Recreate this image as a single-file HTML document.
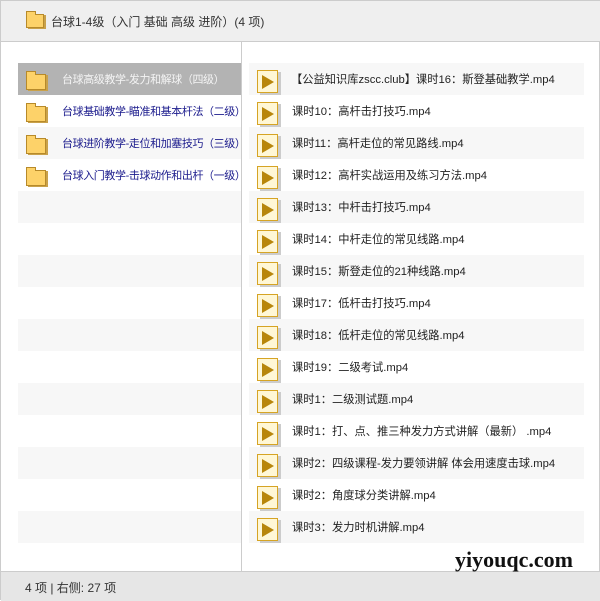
<!DOCTYPE html><html><head><meta charset="utf-8"><style>
*{margin:0;padding:0;box-sizing:border-box}
body{width:600px;height:600px;background:#fff;font-family:"Liberation Sans","Noto Sans CJK SC",sans-serif;font-size:11px;color:#222;position:relative;overflow:hidden;border:1px solid #ccc}
.hdr{position:absolute;left:0;top:0;width:600px;height:41px;background:#efefef;border-bottom:1px solid #ccc}
.ftr{position:absolute;left:0;top:570px;width:600px;height:30px;background:#e6e6e6;border-top:1px solid #ccc}
.div{position:absolute;left:240px;top:41px;width:1px;height:529px;background:#ccc}
.row{position:absolute;height:32px;line-height:34px;white-space:nowrap;overflow:hidden}
.L span{letter-spacing:-0.4px}
.R span{font-size:11.25px}
.fold{position:absolute;width:20px;height:16px;background:#fdd269;border:1px solid #b78a2a;box-shadow:2px 1px 0 #c9a14a}
.fold:before{content:"";position:absolute;left:-1px;top:-4px;width:8px;height:3px;background:#fdd269;border:1px solid #b78a2a;border-bottom:none}
.file{position:absolute;left:8px;top:7px;width:21px;height:23px;background:#fff7d6;border:1px solid #d6a424;box-shadow:3px 2px 0 #ccc}
.file:after{content:"";position:absolute;left:4px;top:4px;border-left:12px solid #b8860b;border-top:7px solid transparent;border-bottom:7px solid transparent}
</style></head><body>
<div class="hdr"><div class="fold" style="left:25px;top:13px;width:18px;height:14px"></div><span style="position:absolute;left:50px;top:12px;font-size:12px;color:#333">台球1-4级（入门 基础 高级 进阶）(4 项)</span></div>
<div class="div"></div>
<div class="row L" style="left:17px;top:62px;width:223px;background:#b3b3b3;color:#f4f4f4"><div class="fold" style="left:8px;top:11px"></div><span style="position:absolute;left:44px">台球高级教学-发力和解球（四级）</span></div>
<div class="row L" style="left:17px;top:94px;width:223px;color:#1a1a8c"><div class="fold" style="left:8px;top:11px"></div><span style="position:absolute;left:44px">台球基础教学-瞄准和基本杆法（二级）</span></div>
<div class="row L" style="left:17px;top:126px;width:223px;background:#f7f7f7;color:#1a1a8c"><div class="fold" style="left:8px;top:11px"></div><span style="position:absolute;left:44px">台球进阶教学-走位和加塞技巧（三级）</span></div>
<div class="row L" style="left:17px;top:158px;width:223px;color:#1a1a8c"><div class="fold" style="left:8px;top:11px"></div><span style="position:absolute;left:44px">台球入门教学-击球动作和出杆（一级）</span></div>
<div class="row" style="left:17px;top:190px;width:223px;background:#f7f7f7"></div>
<div class="row" style="left:17px;top:254px;width:223px;background:#f7f7f7"></div>
<div class="row" style="left:17px;top:318px;width:223px;background:#f7f7f7"></div>
<div class="row" style="left:17px;top:382px;width:223px;background:#f7f7f7"></div>
<div class="row" style="left:17px;top:446px;width:223px;background:#f7f7f7"></div>
<div class="row" style="left:17px;top:510px;width:223px;background:#f7f7f7"></div>
<div id="r"></div>
<script>
var t=["【公益知识库zscc.club】课时16：斯登基础教学.mp4","课时10：高杆击打技巧.mp4","课时11：高杆走位的常见路线.mp4","课时12：高杆实战运用及练习方法.mp4","课时13：中杆击打技巧.mp4","课时14：中杆走位的常见线路.mp4","课时15：斯登走位的21种线路.mp4","课时17：低杆击打技巧.mp4","课时18：低杆走位的常见线路.mp4","课时19：二级考试.mp4","课时1：二级测试题.mp4","课时1：打、点、推三种发力方式讲解（最新） .mp4","课时2：四级课程-发力要领讲解 体会用速度击球.mp4","课时2：角度球分类讲解.mp4","课时3：发力时机讲解.mp4"];
var h="";t.forEach(function(s,i){h+='<div class="row R" style="left:248px;top:'+(62+i*32)+'px;width:335px;'+(i%2==0?'background:#f7f7f7':'')+'"><div class="file"></div><span style="position:absolute;left:'+(i==0?42:43)+'px;color:#222">'+s+'</span></div>'});
document.getElementById("r").innerHTML=h;
</script>
<div class="ftr"><span style="position:absolute;left:24px;top:7px;color:#333;font-size:12px">4 项 | 右侧: 27 项</span></div>
<div style="position:absolute;left:454px;top:546px;font-family:'Liberation Serif',serif;font-weight:bold;font-size:22px;color:#111;z-index:5">yiyouqc.com</div>
</body></html>
